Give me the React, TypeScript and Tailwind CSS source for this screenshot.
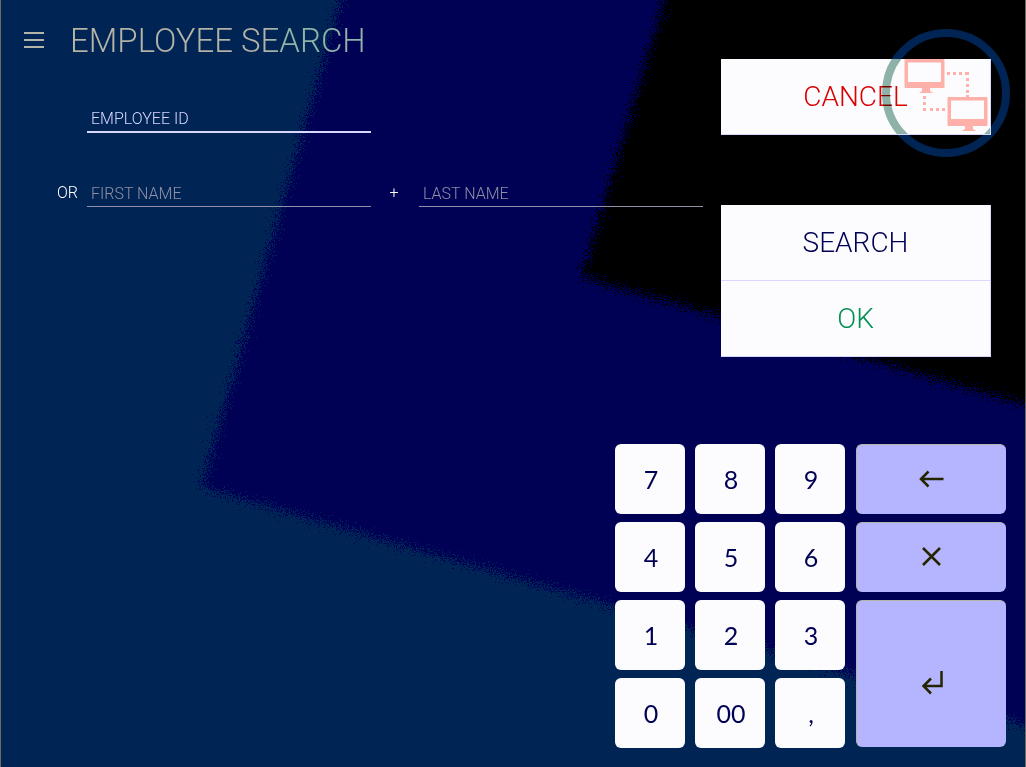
import React from "react";

type KeyProps = {
  label: string;
  className?: string;
  children: React.ReactNode;
};

const digits = [
  ["7", "8", "9"],
  ["4", "5", "6"],
  ["1", "2", "3"],
  ["0", "00", ","],
];

function Backdrop() {
  return (
    <svg
      aria-hidden="true"
      className="absolute inset-0 -z-20 h-full w-full"
      viewBox="0 0 1026 767"
      preserveAspectRatio="none"
    >
      <defs>
        <filter
          id="grain"
          x="-100"
          y="-150"
          width="1300"
          height="1100"
          filterUnits="userSpaceOnUse"
          colorInterpolationFilters="sRGB"
        >
          <feTurbulence type="fractalNoise" baseFrequency="0.85" numOctaves="2" seed="4" />
          <feDisplacementMap
            in="SourceGraphic"
            scale="40"
            xChannelSelector="R"
            yChannelSelector="G"
          />
        </filter>
      </defs>
      <rect width="1026" height="767" fill="#002454" />
      <g filter="url(#grain)" shapeRendering="crispEdges">
        <path d="M372-110 201 487l899 259V-110Z" fill="#000054" />
        <path d="M697-110 582 277l518 149V-110Z" fill="#000" />
      </g>
    </svg>
  );
}

function Ring({ color, className }: { color: string; className: string }) {
  return (
    <svg aria-hidden="true" viewBox="0 0 128 128" className={className}>
      <circle cx="64" cy="64" r="60" fill="none" stroke={color} strokeWidth="8" />
    </svg>
  );
}

function Computers() {
  return (
    <svg
      aria-hidden="true"
      viewBox="0 0 128 128"
      className="absolute -top-[30px] -right-[20px] size-32 fill-[#ffb0a8]"
    >
      <path
        fillRule="evenodd"
        d="M23.500 30h38q1 0 1 1v27q0 1-1 1H48v3l3 2H37l3-2v-3H23.500q-1 0-1-1V31q0-1 1-1Zm2.500 3.500V53h33V33.500Z"
      />
      <path
        fillRule="evenodd"
        d="M66.500 68h38q1 0 1 1v27q0 1-1 1H91v3l3 2H80l3-2v-3H66.500q-1 0-1-1V69q0-1 1-1Zm2.500 3.500V90h33V71.500Z"
      />
      <path d="M65 43h3v3h-3zM71 43h3v3h-3zM77 43h3v3h-3zM83 43h4v3h-4zM84 49h3v3h-3zM84 55h3v3h-3zM84 61h3v3h-3zM84 66h3v3h-3zM41 67h3v3h-3zM41 73h3v3h-3zM41 79h3v3h-3zM48 79h3v3h-3zM54 79h3v3h-3zM60 79h3v3h-3z" />
    </svg>
  );
}

function ActionKey({ label, className = "", children }: KeyProps) {
  return (
    <button
      type="button"
      aria-label={label}
      className={`col-start-4 ml-px flex items-center justify-center rounded-md border-t border-l border-[#b4b4a8] bg-[#b4b4ff] ${className}`}
    >
      <svg
        aria-hidden="true"
        viewBox="0 0 28 28"
        className="size-7 fill-none stroke-[#242400] stroke-[2.500]"
      >
        {children}
      </svg>
    </button>
  );
}

const action =
  "relative flex h-[76px] w-full items-center justify-center overflow-hidden border-r border-b border-[#d8d8ff] bg-[#fcfcff] text-[28px]";
const field = "h-7 w-full min-w-0 bg-transparent px-1 text-base outline-none";

export default function App() {
  return (
    <div className="relative isolate flex min-h-screen flex-col overflow-hidden border-x border-[#6c6c60] font-['Roboto','Liberation_Sans',sans-serif] font-light text-white">
      <Backdrop />

      <div className="flex items-start">
        <div className="min-w-0 flex-1">
          <header className="flex h-20 items-center pl-[23px]">
            <button type="button" aria-label="Menu" className="flex w-5 flex-col gap-[5px]">
              <span className="h-0.5 bg-[#b4b4a8]" />
              <span className="h-0.5 bg-[#b4b4a8]" />
              <span className="h-0.5 bg-[#b4b4a8]" />
            </button>
            <h1 className="ml-[26px] bg-linear-to-r from-[#b4b4a8] from-65% to-[#90b4a8] to-72% bg-clip-text pt-0.5 text-[33px] whitespace-nowrap text-transparent">
              EMPLOYEE SEARCH
            </h1>
          </header>

          <form
            className="mt-[25px] grid grid-cols-[30px_1fr_48px_1fr] items-center gap-y-[46px] pr-[18px] pl-14"
            onSubmit={(event) => event.preventDefault()}
          >
            <input
              type="text"
              aria-label="Employee ID"
              placeholder="EMPLOYEE ID"
              className={`${field} col-start-2 border-b-2 border-[#d8d8ff] placeholder:text-[#d8d8ff]`}
            />
            <span className="col-start-1 text-base leading-6">OR</span>
            <input
              type="text"
              aria-label="First name"
              placeholder="FIRST NAME"
              className={`${field} border-b border-[#9090a8] pt-px placeholder:text-[#9090a8]`}
            />
            <span className="pr-0.5 text-center text-base leading-6">+</span>
            <input
              type="text"
              aria-label="Last name"
              placeholder="LAST NAME"
              className={`${field} border-b border-[#9090a8] pt-px placeholder:text-[#9090a8]`}
            />
          </form>
        </div>

        <div className="mt-[59px] mr-[34px] flex w-[270px] shrink-0 flex-col gap-[70px]">
          <div className="relative">
            <Ring color="#002454" className="absolute -top-[30px] -right-[19px] size-32" />
            <button type="button" className={`${action} text-[#d80000]`}>
              CANCEL
              <Ring
                color="#90b4a8"
                className="absolute -top-[30px] -right-[20px] size-32 mix-blend-multiply"
              />
              <Computers />
            </button>
          </div>
          <div>
            <button type="button" className={`${action} text-[#000054]`}>
              SEARCH
            </button>
            <button type="button" className={`${action} text-[#009054]`}>
              OK
            </button>
          </div>
        </div>
      </div>

      <div className="mt-auto mr-[19px] mb-[19px] grid grid-cols-[70px_70px_70px_151px] grid-rows-[70px_70px_70px_70px] gap-x-2.5 gap-y-2 self-end pt-8">
        {digits.flat().map((digit) => (
          <button
            key={digit}
            type="button"
            className="rounded-md bg-[#fcfcff] pt-0.5 pl-0.5 font-['Lato','Liberation_Sans',sans-serif] text-[25px] font-normal text-[#000054]"
          >
            {digit}
          </button>
        ))}
        <ActionKey label="Backspace" className="row-start-1 pb-0.5">
          <path d="M25.500 14H3M10.500 6.500 3 14l7.500 7.500" />
        </ActionKey>
        <ActionKey label="Clear" className="row-start-2 pb-0.5">
          <path d="m5 5 17 17M22 5 5 22" />
        </ActionKey>
        <ActionKey label="Enter" className="row-span-2 row-start-3 mb-px pt-4">
          <path d="M23.500 3v15H6M13 10.500 5.500 18l7.500 7.500" />
        </ActionKey>
      </div>
    </div>
  );
}
